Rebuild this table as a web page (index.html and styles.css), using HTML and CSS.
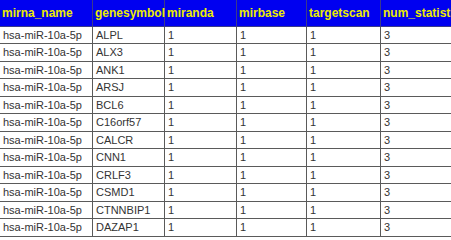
FILE: index.html
```html
<!DOCTYPE html>
<html lang="en">
<head>
    <meta charset="UTF-8">
    <title>mirna targets</title>
    <link rel="stylesheet" href="styles.css">
</head>
<body>

<table class="results">
    <colgroup>
        <col class="c-mirna">
        <col class="c-gene">
        <col class="c-miranda">
        <col class="c-mirbase">
        <col class="c-target">
        <col class="c-num">
    </colgroup>
    <thead>
        <tr>
            <th>mirna_name</th>
            <th>genesymbol</th>
            <th>miranda</th>
            <th>mirbase</th>
            <th>targetscan</th>
            <th>num_statistics</th>
        </tr>
    </thead>
    <tbody id="rows"></tbody>
</table>

<script>
    const genes = ['ALPL', 'ALX3', 'ANK1', 'ARSJ', 'BCL6', 'C16orf57',
                   'CALCR', 'CNN1', 'CRLF3', 'CSMD1', 'CTNNBIP1', 'DAZAP1'];

    const tbody = document.getElementById('rows');
    genes.forEach(function (g) {
        const tr = document.createElement('tr');
        tr.innerHTML = `
    <td>hsa-miR-10a-5p</td>
    <td>${g}</td>
    <td>1</td>
    <td>1</td>
    <td>1</td>
    <td>3</td>`;
        tbody.appendChild(tr);
    });
</script>

</body>
</html>
```

FILE: styles.css
```css
* {
    margin: 0;
    padding: 0;
    box-sizing: border-box;
}

body {
    font-family: 'Liberation Sans', Arial, sans-serif;
    background-color: #fff;
    color: #333;
    overflow: hidden;
    width: 451px;
    height: 240px;
}

.results {
    border-collapse: collapse;
    table-layout: fixed;
    width: 500px;
    margin-left: -1px;
}

.c-mirna { width: 93px; }
.c-gene { width: 72px; }
.c-miranda { width: 72px; }
.c-mirbase { width: 70px; }
.c-target { width: 74px; }
.c-num { width: 119px; }

th, td {
    text-align: left;
    white-space: nowrap;
    padding: 0 3px;
    border: 1px solid #5a5a5a;
}

th {
    height: 26px;
    background-color: #0000f0;
    color: #ecec00;
    font-size: 12px;
    font-weight: bold;
    overflow: visible;
    padding-left: 2px;
    border-top: none;
    border-color: #3a3a8a;
}

td {
    height: 17.5px;
    font-size: 11px;
    overflow: hidden;
    background-color: #fff;
}
```
